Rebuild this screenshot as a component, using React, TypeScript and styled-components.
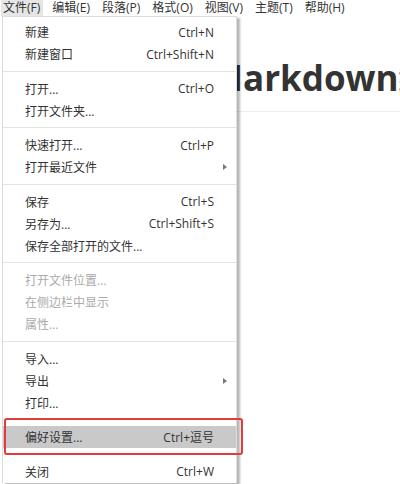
import React from "react";
import styled, { createGlobalStyle } from "styled-components";

const GlobalStyle = createGlobalStyle`
    html, body {
        margin: 0;
        padding: 0;
        background: #ffffff;
    }
    body {
        font-family: "Open Sans", "Noto Sans CJK SC", sans-serif;
        color: #333333;
    }
`;

const Window = styled.div`
    position: relative;
    width: 400px;
    height: 484px;
    overflow: hidden;
    background: #ffffff;
`;

const MenuBar = styled.nav`
    display: flex;
    gap: 7px;
    height: 16px;
    padding-left: 1px;
    font-size: 12px;
    line-height: 16px;
`;

const MenuBarItem = styled.span<{ $active?: boolean }>`
    padding: 0 3px 0 2px;
    color: #333333;
    background: ${(p) => (p.$active ? "#e6e6e6" : "transparent")};
    white-space: nowrap;
`;

const Editor = styled.main`
    padding: 42px 0 0 210px;
`;

const Heading = styled.h1`
    margin: 0;
    padding-bottom: 13px;
    font-family: "Open Sans", "Noto Sans CJK SC", sans-serif;
    font-size: 35px;
    line-height: 40px;
    font-weight: 700;
    color: #333333;
    white-space: nowrap;
    border-bottom: 1px solid #eeeeee;
`;

const Dropdown = styled.div`
    position: absolute;
    top: 16px;
    left: 2px;
    width: 233px;
    padding-top: 4px;
    background: #ffffff;
    border: 1px solid #dcdcdc;
    border-bottom: none;
    box-shadow: 3px 2px 2px rgba(0, 0, 0, 0.28);
    font-size: 12px;
`;

const Item = styled.div<{ $disabled?: boolean; $selected?: boolean }>`
    display: flex;
    align-items: center;
    height: 22px;
    padding: 0 22px 0 22px;
    color: ${(p) => (p.$disabled ? "#aaaaaa" : "#333333")};
    background: ${(p) => (p.$selected ? "#c9c9c9" : "transparent")};
    white-space: nowrap;
`;

const Label = styled.span`
    flex: 1;
`;

const Shortcut = styled.span`
    color: #333333;
`;

const SubArrow = styled.span`
    width: 0;
    height: 0;
    margin-right: -13px;
    border-top: 3.5px solid transparent;
    border-bottom: 3.5px solid transparent;
    border-left: 4px solid #777777;
`;

const Separator = styled.div`
    height: 12.5px;
    display: flex;
    align-items: center;

    &::after {
        content: "";
        flex: 1;
        height: 1px;
        background: #e3e3e3;
    }
`;

const Callout = styled.div`
    position: absolute;
    left: 4px;
    top: 418px;
    width: 235px;
    height: 33px;
    border: 2px solid #e23b3b;
    border-radius: 3px;
`;

type Entry =
    | { kind: "sep" }
    | { kind: "item"; label: string; shortcut?: string; submenu?: boolean; disabled?: boolean; selected?: boolean };

const entries: Entry[] = [
    { kind: "item", label: "新建", shortcut: "Ctrl+N" },
    { kind: "item", label: "新建窗口", shortcut: "Ctrl+Shift+N" },
    { kind: "sep" },
    { kind: "item", label: "打开...", shortcut: "Ctrl+O" },
    { kind: "item", label: "打开文件夹..." },
    { kind: "sep" },
    { kind: "item", label: "快速打开...", shortcut: "Ctrl+P" },
    { kind: "item", label: "打开最近文件", submenu: true },
    { kind: "sep" },
    { kind: "item", label: "保存", shortcut: "Ctrl+S" },
    { kind: "item", label: "另存为...", shortcut: "Ctrl+Shift+S" },
    { kind: "item", label: "保存全部打开的文件..." },
    { kind: "sep" },
    { kind: "item", label: "打开文件位置...", disabled: true },
    { kind: "item", label: "在侧边栏中显示", disabled: true },
    { kind: "item", label: "属性...", disabled: true },
    { kind: "sep" },
    { kind: "item", label: "导入..." },
    { kind: "item", label: "导出", submenu: true },
    { kind: "item", label: "打印..." },
    { kind: "sep" },
    { kind: "item", label: "偏好设置...", shortcut: "Ctrl+逗号", selected: true },
    { kind: "sep" },
    { kind: "item", label: "关闭", shortcut: "Ctrl+W" },
];

const menus = ["文件(F)", "编辑(E)", "段落(P)", "格式(O)", "视图(V)", "主题(T)", "帮助(H)"];

export default function App() {
    return (
        <Window>
            <GlobalStyle />
            <MenuBar>
                {menus.map((m, i) => (
                    <MenuBarItem key={m} $active={i === 0}>
                        {m}
                    </MenuBarItem>
                ))}
            </MenuBar>

            <Editor>
                <Heading>Markdown编辑器</Heading>
            </Editor>

            <Dropdown>
                {entries.map((e, i) =>
                    e.kind === "sep" ? (
                        <Separator key={i} />
                    ) : (
                        <Item key={i} $disabled={e.disabled} $selected={e.selected}>
                            <Label>{e.label}</Label>
                            {e.shortcut && <Shortcut>{e.shortcut}</Shortcut>}
                            {e.submenu && <SubArrow />}
                        </Item>
                    )
                )}
            </Dropdown>

            <Callout />
        </Window>
    );
}
